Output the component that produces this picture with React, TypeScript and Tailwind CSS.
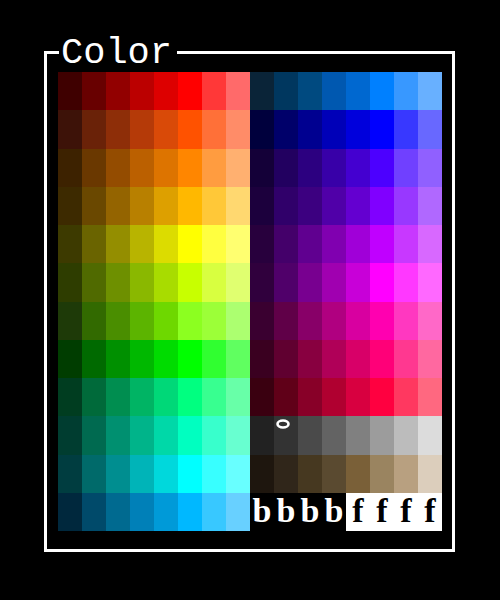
const LEFT: string[][] = [
  ['#3f0000', '#680000', '#920000', '#bb0000', '#dd0000', '#ff0000', '#ff3838', '#ff6a6a'],
  ['#3d1208', '#6a2208', '#8e2e08', '#b53a08', '#d94a08', '#ff5200', '#ff7038', '#ff8c68'],
  ['#3d2200', '#6a3800', '#944c00', '#bb6000', '#dd7400', '#ff8600', '#ff9c40', '#ffb070'],
  ['#3d2a00', '#6a4800', '#946400', '#b88000', '#dda000', '#ffb800', '#ffc838', '#ffd870'],
  ['#3d3a00', '#6a6400', '#948e00', '#b8b400', '#dcdc00', '#ffff00', '#ffff40', '#ffff70'],
  ['#2e3d00', '#506a00', '#6e9000', '#8ab800', '#a8dc00', '#c8ff00', '#d8ff40', '#e0ff70'],
  ['#1e3a08', '#326a00', '#4a8e00', '#5cb400', '#6ed800', '#8cff20', '#9cff38', '#acff70'],
  ['#003d00', '#006a00', '#009000', '#00b800', '#00dc00', '#00ff00', '#30ff30', '#60ff60'],
  ['#003d20', '#006a3a', '#008e50', '#00b464', '#00d878', '#00ff80', '#38ff90', '#68ffa8'],
  ['#003d30', '#006a50', '#009070', '#00b48a', '#00d8a8', '#00ffc0', '#38ffcc', '#68ffd0'],
  ['#003d40', '#006a6a', '#008e90', '#00b4b8', '#00d8dc', '#00ffff', '#38ffff', '#68ffff'],
  ['#00283d', '#004a6a', '#006a90', '#0080b8', '#009ad8', '#00b8ff', '#38c8ff', '#68d0ff'],
];

const RIGHT: string[][] = [
  ['#0a2438', '#00375f', '#004a80', '#0058b0', '#0068d0', '#0080ff', '#3898ff', '#68b0ff'],
  ['#00003d', '#00006a', '#000090', '#0000b8', '#0000dc', '#0000ff', '#3838ff', '#6868ff'],
  ['#140038', '#220060', '#2c0080', '#3800a8', '#4400d0', '#4c00ff', '#7040ff', '#9060ff'],
  ['#1c003d', '#30006a', '#3c0080', '#5000a8', '#6400d0', '#8000ff', '#9838ff', '#b068ff'],
  ['#28003d', '#44006a', '#600090', '#8000b0', '#a000d8', '#c000ff', '#c838ff', '#d868ff'],
  ['#30003d', '#50006a', '#780090', '#a000b0', '#c800d8', '#ff00ff', '#ff38ff', '#ff68ff'],
  ['#3a0030', '#600048', '#880068', '#b00080', '#d800a0', '#ff00b0', '#ff38c0', '#ff68c8'],
  ['#3a0020', '#600030', '#880040', '#b00058', '#d80068', '#ff0078', '#ff3890', '#ff68a0'],
  ['#3a0010', '#600018', '#880028', '#b00030', '#d80040', '#ff0040', '#ff3860', '#ff6880'],
  ['#222222', '#333333', '#4a4a4a', '#636363', '#808080', '#9c9c9c', '#bcbcbc', '#dcdcdc'],
  ['#1e160e', '#30261a', '#463820', '#5a4a30', '#7a6038', '#9a8460', '#b8a080', '#dccebc'],
];

const serif = { fontFamily: '"Liberation Serif", serif' };

function Swatch({ color, selected }: { color: string; selected?: boolean }) {
  return (
    <div className="relative" style={{ backgroundColor: color }}>
      {selected && (
        <svg className="absolute left-[2px] top-[3px]" width="14" height="10" viewBox="0 0 14 10">
          <ellipse cx="7" cy="5" rx="5.5" ry="3.5" fill="none" stroke="#fff" strokeWidth="2.6" />
        </svg>
      )}
    </div>
  );
}

export default function App() {
  return (
    <div className="h-[600px] w-[500px] bg-black pl-[44px] pt-[51px]">
      <div className="relative h-[501px] w-[411px] border-[3px] border-white pl-[11px] pt-[18px]">
        <span
          className="absolute left-[12px] top-[-19px] bg-black pl-[2px] pr-[5px] text-[37px] leading-none text-white"
          style={{ fontFamily: '"Liberation Mono", monospace' }}
        >
          Color
        </span>
        <div className="flex">
          <div className="grid h-[459px] w-[192px] grid-cols-8 grid-rows-12">
            {LEFT.flatMap((row, r) => row.map((c, i) => <Swatch key={`${r}-${i}`} color={c} />))}
          </div>
          <div className="grid h-[459px] w-[192px] grid-cols-8 grid-rows-12">
            {RIGHT.flatMap((row, r) =>
              row.map((c, i) => <Swatch key={`${r}-${i}`} color={c} selected={r === 9 && i === 1} />)
            )}
            {['b', 'b', 'b', 'b'].map((ch, i) => (
              <div key={`b${i}`} className="bg-black text-center text-[34px] font-bold leading-[36px] text-white" style={serif}>
                {ch}
              </div>
            ))}
            {['f', 'f', 'f', 'f'].map((ch, i) => (
              <div key={`f${i}`} className="bg-white text-center text-[34px] font-bold leading-[36px] text-black" style={serif}>
                {ch}
              </div>
            ))}
          </div>
        </div>
      </div>
    </div>
  );
}
